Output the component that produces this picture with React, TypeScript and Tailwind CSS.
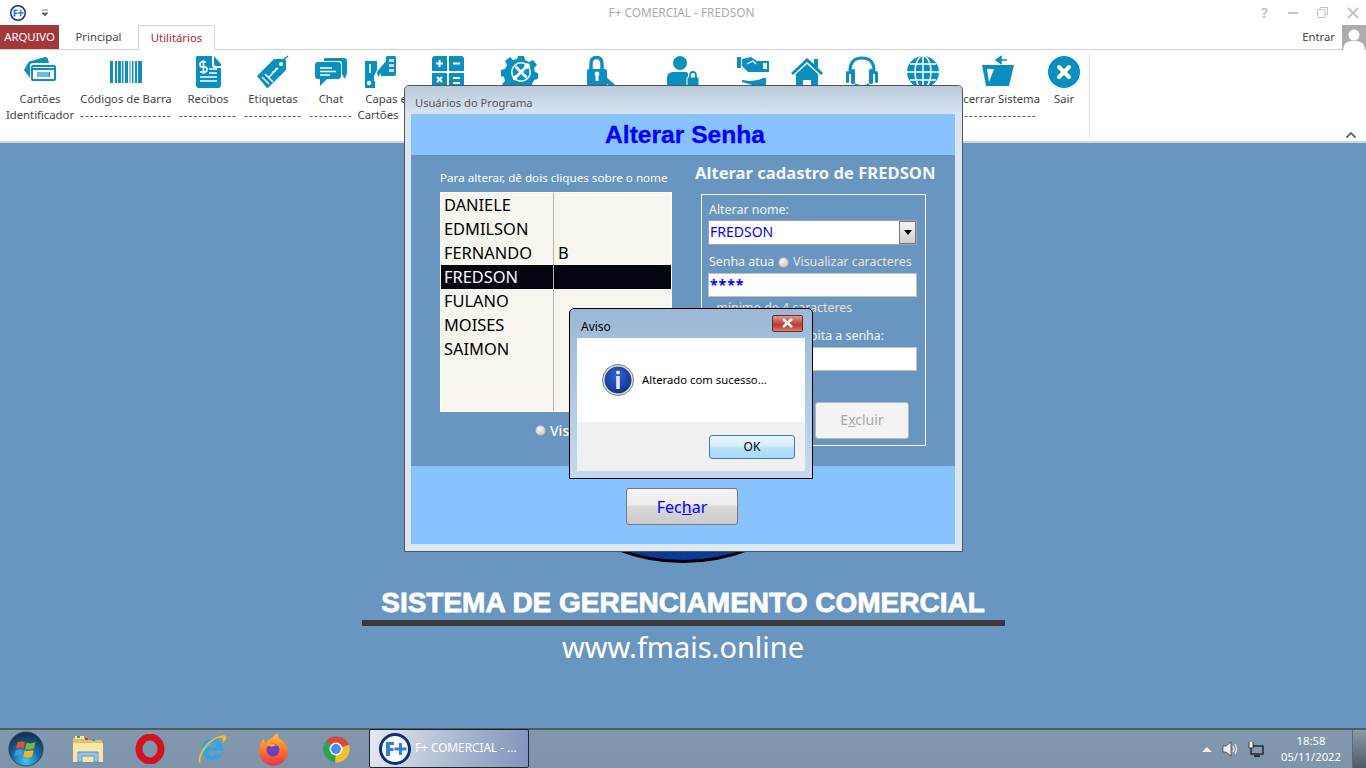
import React from "react";

const TEAL = "#0a8fbf";
const sans = "font-['Noto_Sans','Liberation_Sans',sans-serif]";

const Ico = ({ children }: { children: React.ReactNode }) => (
  <svg width={32} height={32} viewBox="0 0 32 32" fill={TEAL} className="block overflow-visible">
    {children}
  </svg>
);

const icons: Record<string, React.ReactNode> = {
  card: (
    <Ico>
      <path d="M0 14 L4 7 Q5 5 7 5 L21 1 Q23 1 24 3 L25 7 L9 7 Q6 7 6 10 L6 22 Z" />
      <rect x="7" y="9" width="25" height="16" rx="2" />
      <rect x="9" y="11" width="21" height="12" fill="#fff" />
      <rect x="9" y="12" width="21" height="2" />
      <path d="M13 16h13v5H13z" fill={TEAL} />
      <path d="M14 16v5M16 16v5M18 16v5M20 16v5M22 16v5M24 16v5" stroke="#fff" strokeWidth="0.8" />
    </Ico>
  ),
  barcode: (
    <Ico>
      <path d="M0 5h3v22H0zM5 5h2v22H5zM8 5h3v22H8zM12 5h1.500v22H12zM15 5h3v22h-3zM19.500 5h1v22h-1zM22 5h1.500v22H22zM25 5h2v22h-2zM28 5h4v22h-4z" />
    </Ico>
  ),
  doc: (
    <Ico>
      <path d="M5 0H20V9Q20 12 23 12H29V29Q29 32 26 32H7Q4 32 4 29V2Q4 0 5 0Z" />
      <path d="M22 0L29 8V10H24Q22 10 22 8Z" />
      <path d="M14 6H10Q8 6 8 8.500T10 11h3Q15 11 15 13.500T13 16H8M11.500 4v14" fill="none" stroke="#fff" strokeWidth="1.600" />
      <path d="M17 13h8M17 17h8M8 21h17M8 25h17" stroke="#fff" strokeWidth="1.600" />
    </Ico>
  ),
  tag: (
    <Ico>
      <path d="M0 20L17 3H27Q29 3 29 5V14L11 32Q10 32 9 31Z" />
      <circle cx="24" cy="8" r="2" fill="#fff" />
      <path d="M24 6L31 0" stroke={TEAL} strokeWidth="1.500" />
      <path d="M8 18l8 8M12 21l9-9M15 17l2-2M18 14l2-2" stroke="#fff" strokeWidth="1.500" />
      <path d="M5 21l7 7" stroke="#fff" strokeWidth="1.200" />
    </Ico>
  ),
  chat: (
    <Ico>
      <path d="M9 2H29Q32 2 32 5V17Q32 20 29 23L28 19H27V8Q27 5 24 5H9Z" />
      <path d="M3 6H23Q26 6 26 9V20Q26 23 23 23H12L5 30V23H3Q0 23 0 20V9Q0 6 3 6Z" />
      <path d="M5 12h12M5 15.500h16M5 19h10" stroke="#fff" strokeWidth="1.300" />
    </Ico>
  ),
  capas: (
    <Ico>
      <path d="M1 5H13V14L10 20V25H11V32H1Z" />
      <path d="M6 8v9" stroke="#fff" strokeWidth="1.500" />
      <circle cx="5" cy="27" r="2.200" fill="#fff" />
      <path d="M17 11L22 5V1Q22 0 24 0H31Q32 0 32 2V18Q32 20 30 20H17V17L14 21L13 16Z" />
      <path d="M25 3h5v3h-5zM25 8h5v3h-5zM25 13h5v3h-5z" fill="#c9d8df" />
    </Ico>
  ),
  calc: (
    <Ico>
      <path d="M3 0H15V15H0V3Q0 0 3 0ZM17 0H29Q32 0 32 3V15H17ZM0 17H15V32H3Q0 32 0 29ZM17 17H32V29Q32 32 29 32H17Z" />
      <path d="M7.500 4v7M4 7.500h7M21 7.500h7M5 21l5 5M10 21l-5 5M21 22h7M21 27h7" stroke="#fff" strokeWidth="2" />
    </Ico>
  ),
  gear: (
    <Ico>
      <path d="M13 0h6l1 4 4 2 4-2 4 5-3 3 1 4 3 1v6l-4 1-2 4 2 4-5 4-3-3-4 1-1 3h-6l-1-4-4-2-4 2-4-5 3-3-1-4-3-1v-6l4-1 2-4-2-4 5-4 3 3 4-1z" />
      <circle cx="16" cy="16" r="10" fill="#fff" />
      <circle cx="16" cy="16" r="8.500" />
      <path d="M10.500 10.500L21.500 21.500M21.500 10.500L10.500 21.500" stroke="#fff" strokeWidth="2.800" />
      <circle cx="22" cy="10" r="2.800" fill="#fff" />
      <circle cx="10" cy="22" r="2.400" fill="#fff" />
    </Ico>
  ),
  lock: (
    <Ico>
      <g transform="translate(5 0)">
        <path d="M5 13V8Q5 1.500 10.500 1.500T16 8V13" fill="none" stroke={TEAL} strokeWidth="3.500" />
        <rect x="1" y="13" width="20" height="19" rx="2" />
        <rect x="9.500" y="18" width="3" height="7" fill="#fff" />
        <circle cx="11" cy="18" r="2.400" fill="#fff" />
        <path d="M19 23l8 7" stroke={TEAL} strokeWidth="4.500" strokeLinecap="round" />
      </g>
    </Ico>
  ),
  user: (
    <Ico>
      <circle cx="13" cy="7" r="7" />
      <path d="M0 32V22Q0 16 6 16H19Q21 16 21 18V32Z" />
      <rect x="20" y="21" width="12" height="11" rx="1" stroke="#fff" />
      <path d="M23 22V20Q23 16 26 16T29 20V22" fill="none" stroke={TEAL} strokeWidth="1.800" />
    </Ico>
  ),
  money: (
    <Ico>
      <path d="M0 1h4v11H0zM5 3L14 1L20 5L32 5V16H11L5 10Z" />
      <path d="M10 8l6-3 3 3" stroke="#fff" strokeWidth="1.300" fill="none" />
      <path d="M26 7h4v6h-4z" fill="#fff" />
      <path d="M10 18H32v2H10z" fill="#fff" />
      <path d="M5 24l8 1 8-1 5-2h3v9h-4l-10-2-10-3z" />
    </Ico>
  ),
  home: (
    <Ico>
      <path d="M0 17L16 2L23 8V3H27V12L32 17L30 19L16 6L2 19Z" />
      <path d="M5 18L16 8L27 18V32H20V24H12V32H5Z" />
    </Ico>
  ),
  headset: (
    <Ico>
      <path d="M4 18V15Q4 2 16 2T28 15V18" fill="none" stroke={TEAL} strokeWidth="3" />
      <rect x="0" y="15" width="3" height="12" rx="1.500" />
      <rect x="5" y="13" width="4" height="15" rx="1.500" />
      <rect x="23" y="13" width="4" height="15" rx="1.500" />
      <rect x="29" y="15" width="3" height="12" rx="1.500" />
      <path d="M9 28Q16 32 23 28" fill="none" stroke={TEAL} strokeWidth="2" />
    </Ico>
  ),
  globe: (
    <Ico>
      <circle cx="16" cy="16" r="16" />
      <path d="M16 0v32M0 16h32M3 8h26M3 24h26" stroke="#fff" strokeWidth="1.500" />
      <ellipse cx="16" cy="16" rx="8" ry="16" fill="none" stroke="#fff" strokeWidth="1.500" />
    </Ico>
  ),
  exit: (
    <Ico>
      <path d="M0 9H32L27 30H4Z" />
      <path d="M5 13H12L7 26Z" fill="#fff" />
      <path d="M25 4H15M19 0.500L14 4L19 7.500Z" stroke={TEAL} strokeWidth="1.500" />
    </Ico>
  ),
  sair: (
    <Ico>
      <circle cx="16" cy="16" r="16" />
      <path d="M11 11L21 21M21 11L11 21" stroke="#fff" strokeWidth="4" strokeLinecap="round" />
    </Ico>
  ),
};

const items: { w: string; icon: string; a: string; b: string; dash?: boolean; off?: string; off2?: string }[] = [
  { w: "w-[80px]", icon: "card", a: "Cartões", b: "Identificador" },
  { w: "w-[92px]", icon: "barcode", a: "Códigos de Barra", b: "-------------------", dash: true },
  { w: "w-[72px]", icon: "doc", a: "Recibos", b: "------------", dash: true },
  { w: "w-[58px]", icon: "tag", a: "Etiquetas", b: "------------", dash: true },
  { w: "w-[58px]", icon: "chat", a: "Chat", b: "---------", dash: true },
  { w: "w-[40px]", icon: "capas", a: "Capas e", b: "Cartões", off: "ml-[12px]", off2: "-ml-[4px]" },
  { w: "w-[96px]", icon: "calc", a: "", b: "" },
  { w: "w-[50px]", icon: "gear", a: "", b: "" },
  { w: "w-[102px]", icon: "lock", a: "", b: "" },
  { w: "w-[70px]", icon: "user", a: "", b: "" },
  { w: "w-[70px]", icon: "money", a: "", b: "" },
  { w: "w-[38px]", icon: "home", a: "", b: "" },
  { w: "w-[72px]", icon: "headset", a: "", b: "" },
  { w: "w-[50px]", icon: "globe", a: "", b: "" },
  { w: "w-[100px]", icon: "exit", a: "Encerrar Sistema", b: "----------------", dash: true, off: "-ml-[6px]" },
  { w: "w-[32px]", icon: "sair", a: "Sair", b: "" },
];

const FLogo = ({ size }: { size: number }) => (
  <svg width={size} height={size} viewBox="0 0 32 32" className="block shrink-0">
    <circle cx="16" cy="16" r="14.500" fill="#fff" stroke="#0b2f84" strokeWidth="3" />
    <path d="M7 9H15V12H11V15H14.500V18H11V23H7Z" fill="#2f80dc" />
    <path d="M20 10H23V14.500H27.500V17.500H23V22H20V17.500H15.500V14.500H20Z" fill="#2f80dc" />
  </svg>
);

const Radio = ({ className = "" }: { className?: string }) => (
  <span className={`inline-block w-[11px] h-[11px] rounded-full border border-[#a8a8a8] bg-[radial-gradient(circle_at_40%_35%,#f8f8f8,#bcbcbc)] ${className}`} />
);

const users = [
  ["DANIELE", ""],
  ["EDMILSON", ""],
  ["FERNANDO", "B"],
  ["FREDSON", ""],
  ["FULANO", ""],
  ["MOISES", ""],
  ["SAIMON", ""],
];

function Ribbon() {
  return (
    <div className="h-[93px] bg-white border-b-2 border-[#cfd6dd] flex relative shrink-0">
      {items.map((it, i) => (
        <div key={i} className={`${it.w} shrink-0 flex flex-col items-center pt-[6px]`}>
          <div className="w-[32px] h-[32px] shrink-0 flex justify-center">{icons[it.icon]}</div>
          <div className={`h-[16px] mt-[3px] leading-[16px] text-[11.3px] text-[#444] whitespace-nowrap flex justify-center w-0 ${it.off || ""}`}>{it.a}</div>
          <div className={`h-[16px] leading-[16px] text-[11.3px] text-[#444] whitespace-nowrap flex justify-center w-0 ${it.off2 || ""} ${it.dash ? "tracking-[1.2px]" : ""}`}>{it.b}</div>
        </div>
      ))}
      <div className="w-[1px] h-[84px] bg-[#dcdcdc] ml-[9px] mt-[4px]" />
      <svg width="12" height="8" viewBox="0 0 12 8" className="ml-auto mr-[9px] mt-[81px]">
        <path d="M1.500 6.500L6 2L10.500 6.500" fill="none" stroke="#666" strokeWidth="1.800" />
      </svg>
    </div>
  );
}

function MainWindow() {
  return (
    <div className="absolute left-[404px] top-[85px] w-[559px] h-[467px] border border-[#555] rounded-t-[5px] bg-[#dae6f2] flex flex-col pl-[6px] pr-[7px] pb-[7px]">
      <div className="h-[28px] -ml-[6px] -mr-[7px] px-[10px] flex items-center pt-[6px] bg-[linear-gradient(#b9c9d9,#d8e5f2)] rounded-t-[5px] text-[11.15px] text-[#555] shrink-0">
        Usuários do Programa
      </div>
      <div className="h-[41px] bg-[#88c2ff] flex items-center justify-center pl-[4px] pt-[2px] text-[24.6px] font-bold text-[#0000ff] font-['Liberation_Sans',sans-serif] [-webkit-text-stroke:0.3px_#0000ff] shrink-0">
        Alterar Senha
      </div>
      <div className="h-[311px] bg-[#6996c0] flex shrink-0">
        <div className="w-[284px] pl-[29px] shrink-0">
          <div className="h-[37px] pt-[14px] text-[11.65px] leading-[17px] text-white whitespace-nowrap">Para alterar, dê dois cliques sobre o nome</div>
          <div className="w-[232px] h-[220px] bg-[#f6f6ee] border border-white pt-0 relative">
            {users.map(([n, v], i) => (
              <div key={i} className={`h-[24px] flex items-center text-[16.4px] ${n === "FREDSON" ? "bg-[#05050f] text-white" : "text-black"}`}>
                <div className="w-[112px] pl-[3px] shrink-0 h-full leading-[24px]">{n}</div>
                <div className="pl-[4px] h-full leading-[24px] border-l border-[#b5b5b5]">{v}</div>
              </div>
            ))}
            <div className="h-[50px] w-[113px] border-r border-[#b5b5b5]" />
          </div>
          <div className="flex items-center pl-[95px] mt-[8px] text-[14px] font-medium text-white">
            <Radio className="mr-[4px]" />
            Visualizar
          </div>
        </div>
        <div className="flex-1 min-w-0">
          <div className="h-[39px] pt-[6px] text-[16.6px] leading-[24px] font-bold text-[#f4f7fa] whitespace-nowrap">Alterar cadastro de FREDSON</div>
          <div className="ml-[6px] w-[225px] h-[252px] border border-white pl-[6px] pr-[8px] pt-[7px] text-[12.4px] text-[#f3f3f3]">
            <div className="leading-[16px] h-[18px] pl-[1px]">Alterar nome:</div>
            <div className="h-[25px] bg-white border border-[#a5a5a5] flex items-center justify-between text-[14px] text-[#0000ff] pl-[1px]">
              <span className="pb-[2px]">FREDSON</span>
              <span className="w-[17px] h-full border border-[#777] bg-[linear-gradient(#f5f5f5,#cfcfcf)] flex items-center justify-center">
                <svg width="8" height="5" viewBox="0 0 8 5"><path d="M0 0H8L4 5Z" fill="#000" /></svg>
              </span>
            </div>
            <div className="h-[28px] pt-[7px] flex items-center whitespace-nowrap pl-[1px]">
              <span className="w-[69px]">Senha atua</span>
              <Radio className="mr-[4px]" />
              <span className="text-[#eee1d7]">Visualizar caracteres</span>
            </div>
            <div className="h-[24px] bg-white border border-[#c0c0c0] text-[14px] font-bold leading-[22px] tracking-[1px] text-[#0000ff] pl-[1px]">****</div>
            <div className="h-[21px] leading-[21px] text-[#e6e1dc] pl-[1px] whitespace-nowrap">- mínimo de 4 caracteres</div>
            <div className="h-[22px] leading-[22px] mt-[7px] text-right pr-[33px]">Repita a senha:</div>
            <div className="h-[24px] bg-white border border-[#c0c0c0]" />
            <div className="mt-[31px] ml-[107px] w-[94px] h-[37px] rounded-[3px] border border-[#b5b5b5] bg-[#f3f3f3] flex items-center justify-center text-[14px] text-[#a8a8a8] pb-[2px]">
              <span>E<span className="underline">x</span>cluir</span>
            </div>
          </div>
        </div>
      </div>
      <div className="flex-1 bg-[#88c2ff] flex justify-center pt-[22px] pr-[2px]">
        <div className="w-[112px] h-[37px] rounded-[3px] border border-[#777] bg-[linear-gradient(#f3f3f3_0%,#ececec_45%,#d8d8d8_50%,#cccccc_100%)] flex items-center justify-center text-[16px] text-[#0000ff]">
          <span>Fec<span className="underline">h</span>ar</span>
        </div>
      </div>
    </div>
  );
}

function InfoIcon() {
  return (
    <svg width="32" height="32" viewBox="0 0 32 32" className="shrink-0">
      <defs>
        <radialGradient id="ib" cx="45%" cy="35%" r="70%">
          <stop offset="0" stopColor="#2e63d6" />
          <stop offset="1" stopColor="#12327f" />
        </radialGradient>
      </defs>
      <circle cx="16" cy="16" r="15.500" fill="#e8e8e8" stroke="#777" />
      <circle cx="16" cy="16" r="13.500" fill="url(#ib)" />
      <circle cx="16" cy="8.500" r="2" fill="#dfe6f5" />
      <rect x="14.200" y="12" width="3.600" height="13" fill="#dfe6f5" />
    </svg>
  );
}

function Dialog() {
  return (
    <div className="absolute left-[569px] top-[308px] w-[244px] h-[171px] border border-black rounded-t-[5px] bg-[linear-gradient(#9cb8d6,#c5daee)] flex flex-col px-[7px] pb-[7px]">
      <div className="h-[29px] flex items-center justify-between pl-[4px] pr-[2px] text-[12px] text-black shrink-0">
        <span className="pt-[7px]">Aviso</span>
        <span className="w-[31px] h-[17px] rounded-[2px] border border-[#6a2c2c] bg-[linear-gradient(#d89a92,#c0473c_50%,#bd3a30_60%,#d27f76)] flex items-center justify-center mt-[-1px]">
          <svg width="13" height="10" viewBox="0 0 13 10"><path d="M2 1L11 9M11 1L2 9" stroke="#f4f4f4" strokeWidth="2.600" /></svg>
        </span>
      </div>
      <div className="h-[84px] bg-white flex items-center pl-[25px] gap-[8px] text-[11.3px] text-black shrink-0">
        <InfoIcon />
        Alterado com sucesso...
      </div>
      <div className="flex-1 bg-[#f0f0f0] flex justify-end pr-[10px] pt-[13px]">
        <div className="w-[86px] h-[24px] rounded-[3px] border border-[#3c7fb1] bg-[linear-gradient(#e9f6fd,#d5eefb_45%,#b5e0f7_55%,#a9d9f4)] flex items-center justify-center text-[12px] text-black">OK</div>
      </div>
    </div>
  );
}

function Taskbar() {
  return (
    <div className="h-[40px] shrink-0 border-t-2 border-[#4d5b68] bg-[linear-gradient(#8298ae,#7e94aa)] flex text-white">
      <div className="w-[52px] flex items-center justify-center shrink-0">
        <svg width="36" height="36" viewBox="0 0 38 38">
          <defs>
            <radialGradient id="orb" cx="50%" cy="85%" r="80%">
              <stop offset="0" stopColor="#3fc8f0" />
              <stop offset="0.5" stopColor="#1c6a9f" />
              <stop offset="1" stopColor="#12304f" />
            </radialGradient>
          </defs>
          <circle cx="19" cy="19" r="18" fill="url(#orb)" stroke="#26465f" />
          <path d="M10 12Q14 10 18 12L16.500 18.500Q13 17 8.500 18.500Z" fill="#e2502e" />
          <path d="M19.500 12.500Q24 14 29 11.500L27.500 18.500Q22.500 20.500 18 19Z" fill="#7bb542" />
          <path d="M8 20Q12 18.500 16 20L14.500 26.500Q11 25 6.500 26.500Z" fill="#3c9be0" />
          <path d="M17.500 20.500Q22.500 22 27 20L25.500 27Q21 29 16 27Z" fill="#f1b52b" />
        </svg>
      </div>
      <div className="w-[62px] ml-[5px] flex items-center justify-center shrink-0">
        <svg width="32" height="30" viewBox="0 0 32 30">
          <path d="M1 4H12L14 6H30V26H1Z" fill="#e3bf6a" />
          <path d="M3 2H12V5H3Z" fill="#f3e3ac" />
          <rect x="5" y="2" width="3" height="2" fill="#2fae3e" />
          <rect x="13" y="4" width="3" height="2" fill="#d23a2e" />
          <rect x="20" y="5" width="3" height="2" fill="#2f9ad6" />
          <path d="M1 9H31V28H1Z" fill="#f6e6a9" />
          <path d="M6 28V18H26V28H22V22H10V28Z" fill="#8fc4e6" stroke="#5e9ac4" />
        </svg>
      </div>
      <div className="w-[62px] flex items-center justify-center shrink-0">
        <svg width="30" height="30" viewBox="0 0 30 30">
          <ellipse cx="15" cy="15" rx="11" ry="12" fill="none" stroke="#d4121f" strokeWidth="7" />
        </svg>
      </div>
      <div className="w-[62px] flex items-center justify-center shrink-0">
        <svg width="32" height="32" viewBox="0 0 32 32">
          <path d="M16 6C10 6 6 10 6 16C6 23 11 27 17 27C22 27 25 24 26 21H20C19 22.500 18 23 16.500 23C14 23 12 21 12 18H27V16C27 10 22 6 16 6ZM12 14C12.500 11.500 14 10 16.500 10C19 10 20.500 11.500 21 14Z" fill="#2ea7e8" />
          <path d="M3 30C1 26 6 14 14 8C21 3 28 1 30 3C31 5 29 8 27 10C28 6 26 4 22 5C15 7 7 17 5 24C4 27 4 29 5 29Z" fill="#f3c12b" />
        </svg>
      </div>
      <div className="w-[62px] flex items-center justify-center shrink-0">
        <svg width="32" height="34" viewBox="0 0 32 34">
          <defs>
            <linearGradient id="ff" x1="0" y1="0" x2="0" y2="1">
              <stop offset="0" stopColor="#ffc22c" />
              <stop offset="0.5" stopColor="#ff7a2a" />
              <stop offset="1" stopColor="#e9304c" />
            </linearGradient>
          </defs>
          <path d="M2 14Q3 9 6 7Q6 10 8 11Q10 7 14 6Q16 3 20 1Q19 5 22 7Q28 10 30 18A14.500 14.500 0 1 1 2 14Z" fill="url(#ff)" />
          <circle cx="15" cy="18" r="6.500" fill="#6a3fc4" />
          <path d="M8 13Q14 10 20 14Q16 13 14 15Z" fill="#f9a332" />
        </svg>
      </div>
      <div className="w-[62px] flex items-center justify-center shrink-0">
        <svg width="30" height="30" viewBox="0 0 30 30">
          <path d="M15 15L5 7A13.500 13.500 0 0 1 28 11Z" fill="#d9453a" />
          <path d="M15 15L28 11A13.500 13.500 0 0 1 14 28.500Z" fill="#f5c02b" />
          <path d="M15 15L14 28.500A13.500 13.500 0 0 1 5 7Z" fill="#2fa352" />
          <circle cx="15" cy="15" r="6.500" fill="#fff" />
          <circle cx="15" cy="15" r="5" fill="#4a8df0" />
        </svg>
      </div>
      <div className="w-[160px] ml-[2px] h-[39px] -mt-[1px] border border-[#1b2530] rounded-[2px] bg-[linear-gradient(100deg,#e6eaf0,#a9b8d0_55%,#7f94bd)] flex items-center pl-[9px] gap-[4px] text-[11.8px] shrink-0 whitespace-nowrap">
        <FLogo size={32} />
        <span className="pb-[1px]">F+ COMERCIAL - ...</span>
      </div>
      <div className="flex-1" />
      <div className="flex items-center shrink-0">
        <svg width="10" height="6" viewBox="0 0 10 6" className="mr-[10px]"><path d="M0 6L5 1L10 6Z" fill="#f2f2f2" /></svg>
        <svg width="18" height="16" viewBox="0 0 18 16" className="mr-[8px]">
          <path d="M1 5H4L9 1V15L4 11H1Z" fill="#eee" stroke="#333" strokeWidth="0.700" />
          <path d="M11 5Q13 8 11 11M13 3Q16 8 13 13" fill="none" stroke="#eee" strokeWidth="1.200" />
        </svg>
        <svg width="16" height="16" viewBox="0 0 16 16" className="mr-[6px]">
          <rect x="3" y="5" width="12" height="8" fill="#7f97ad" stroke="#111" strokeWidth="1.200" />
          <path d="M6 15H12" stroke="#111" strokeWidth="1.500" />
          <path d="M1 1V7H5V1" fill="#eee" stroke="#222" strokeWidth="0.800" />
        </svg>
        <div className="w-[82px] text-center text-[11.3px] leading-[16px] text-white">
          <div>18:58</div>
          <div>05/11/2022</div>
        </div>
        <div className="w-[14px] h-[38px] border-l border-[#5a6a7a] bg-[linear-gradient(#8b9aa8,#4f5a65)]" />
      </div>
    </div>
  );
}

export default function App() {
  return (
    <div className={`relative w-[1366px] h-[768px] overflow-hidden flex flex-col bg-white ${sans}`}>
      <div className="h-[25px] grid grid-cols-[1fr_auto_1fr] items-center shrink-0">
        <div className="flex items-center pl-[10px] gap-[15px]">
          <FLogo size={16} />
          <svg width="8" height="8" viewBox="0 0 8 8"><path d="M1 1H7M1 4H7L4 7Z" fill="#666" stroke="#666" strokeWidth="0.800" /></svg>
        </div>
        <div className="text-[11.85px] text-[#aaa] pr-[3px]">F+ COMERCIAL - FREDSON</div>
        <div className="flex items-center justify-end pr-[7px] gap-[19px] text-[#c4c4c4]">
          <span className="text-[15px] font-bold leading-none w-[8px]">?</span>
          <svg width="10" height="2" viewBox="0 0 10 2"><rect width="10" height="2" fill="#c4c4c4" /></svg>
          <svg width="11" height="11" viewBox="0 0 11 11"><path d="M3 2.500V0.500H10.500V7.500H8.500M0.500 2.500H8V10.500H0.500Z" fill="none" stroke="#c4c4c4" /></svg>
          <svg width="12" height="12" viewBox="0 0 12 12"><path d="M1 1L11 11M11 1L1 11" stroke="#c4c4c4" strokeWidth="2" /></svg>
        </div>
      </div>
      <div className="h-[25px] flex items-stretch border-b border-[#d4d4d4] text-[11.3px] shrink-0">
        <div className="w-[59px] bg-[#a4373a] text-white flex items-center justify-center">ARQUIVO</div>
        <div className="w-[79px] flex items-center justify-center text-[#444]">Principal</div>
        <div className="w-[77px] h-[25px] bg-white border border-b-0 border-[#d4d4d4] flex items-center justify-center text-[#a4262c]">Utilitários</div>
        <div className="flex-1" />
        <div className="flex items-center text-[#444] mr-[7px]">Entrar</div>
        <div className="w-[24px] h-[25px] bg-[#acacac] overflow-hidden">
          <svg width="24" height="25" viewBox="0 0 24 25">
            <circle cx="12" cy="10" r="5.500" fill="#fff" />
            <path d="M1 25Q1 17 9 16H15Q23 17 23 25Z" fill="#fff" />
          </svg>
        </div>
      </div>
      <Ribbon />
      <div className="flex-1 bg-[#6996c0] flex flex-col items-center pt-[50px] text-white min-h-0">
        <div className="w-[370px] h-[370px] rounded-full bg-[#0b3a96] border-[3px] border-black shrink-0" />
        <div className="mt-[25px] h-[31px] leading-[30px] text-[28px] font-bold whitespace-nowrap font-['Liberation_Sans',sans-serif] [-webkit-text-stroke:0.8px_white]">
          SISTEMA DE GERENCIAMENTO COMERCIAL
        </div>
        <div className="w-[643px] h-[6px] bg-[#3a3839] mt-[1px] shrink-0" />
        <div className="text-[29px] leading-[42px] whitespace-nowrap">www.fmais.online</div>
      </div>
      <Taskbar />
      <MainWindow />
      <Dialog />
    </div>
  );
}
